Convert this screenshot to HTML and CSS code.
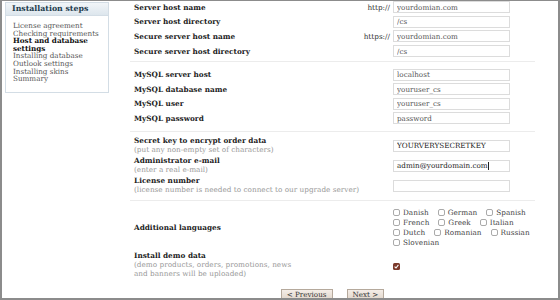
FILE: index.html
```html
<!DOCTYPE html>
<html lang="en">
<head>
    <meta charset="UTF-8">
    <title>Installation - Host and database settings</title>
    <link rel="stylesheet" href="styles.css">
</head>
<body>
    <div class="page">
        <div class="sidebar">
            <div class="sidebar-title">Installation steps</div>
            <ul class="steps">
                <li>License agreement</li>
                <li>Checking requirements</li>
                <li class="current">Host and database settings</li>
                <li>Installing database</li>
                <li>Outlook settings</li>
                <li>Installing skins</li>
                <li>Summary</li>
            </ul>
        </div>

        <div class="main">
            <div class="section host">
                <div class="row">
                    <div class="label">Server host name</div>
                    <div class="prefix">http://</div>
                    <input class="field" type="text" value="yourdomian.com">
                </div>
                <div class="row">
                    <div class="label">Server host directory</div>
                    <input class="field" type="text" value="/cs">
                </div>
                <div class="row">
                    <div class="label">Secure server host name</div>
                    <div class="prefix">https://</div>
                    <input class="field" type="text" value="yourdomian.com">
                </div>
                <div class="row">
                    <div class="label">Secure server host directory</div>
                    <input class="field" type="text" value="/cs">
                </div>
            </div>

            <div class="section db">
                <div class="row">
                    <div class="label">MySQL server host</div>
                    <input class="field" type="text" value="localhost">
                </div>
                <div class="row">
                    <div class="label">MySQL database name</div>
                    <input class="field" type="text" value="youruser_cs">
                </div>
                <div class="row">
                    <div class="label">MySQL user</div>
                    <input class="field" type="text" value="youruser_cs">
                </div>
                <div class="row">
                    <div class="label">MySQL password</div>
                    <input class="field" type="text" value="password">
                </div>
            </div>

            <div class="section keys">
                <div class="row tall">
                    <div class="label">Secret key to encrypt order data<span class="hint">(put any non-empty set of characters)</span></div>
                    <input class="field dark" type="text" value="YOURVERYSECRETKEY">
                </div>
                <div class="row tall">
                    <div class="label">Administrator e-mail<span class="hint">(enter a real e-mail)</span></div>
                    <div class="field dark focused">admin@yourdomain.com<span class="caret"></span></div>
                </div>
                <div class="row tall">
                    <div class="label">License number<span class="hint">(license number is needed to connect to our upgrade server)</span></div>
                    <input class="field" type="text" value="">
                </div>
            </div>

            <div class="section last">
                <div class="row langs-row">
                    <div class="label">Additional languages</div>
                    <div class="langs">
                        <label><span class="box"></span>Danish</label>
                        <label><span class="box"></span>German</label>
                        <label><span class="box"></span>Spanish</label>
                        <label><span class="box"></span>French</label>
                        <label><span class="box"></span>Greek</label>
                        <label><span class="box"></span>Italian</label>
                        <label><span class="box"></span>Dutch</label>
                        <label><span class="box"></span>Romanian</label>
                        <label><span class="box"></span>Russian</label>
                        <label><span class="box"></span>Slovenian</label>
                    </div>
                </div>
                <div class="row demo-row">
                    <div class="label">Install demo data<span class="hint">(demo products, orders, promotions, news<br>and banners will be uploaded)</span></div>
                    <div class="demo-check">
                        <svg class="checked" width="7" height="7" viewBox="0 0 7 7">
                            <rect x="0" y="0" width="7" height="7" rx="1.5" fill="#7b3a2b"/>
                            <path d="M1.6 3.6 L3 5 L5.4 1.9" fill="none" stroke="#fff" stroke-width="1.1"/>
                        </svg>
                    </div>
                </div>
            </div>

            <div class="buttons">
                <button class="btn">&lt; Previous</button>
                <button class="btn">Next &gt;</button>
            </div>
        </div>
    </div>
</body>
</html>
```

FILE: styles.css
```css
body {
    margin: 0;
    font-family: "DejaVu Serif", serif;
    font-size: 7.3px;
    background-color: #fff;
    color: #222;
}

.page {
    display: flex;
    align-items: flex-start;
    width: 560px;
    height: 300px;
    box-sizing: border-box;
    border: 2px solid #8c8c8c;
    border-top-width: 1px;
    overflow: hidden;
}

/* left column with the steps */
.sidebar {
    width: 102px;
    margin: 1px 0 0 3px;
    border: 1px solid #d3dde5;
    padding-bottom: 9px;
}

.sidebar-title {
    height: 12px;
    line-height: 12px;
    padding: 0 6px;
    background: linear-gradient(#f1f5f8, #dde6ed);
    border-bottom: 1px solid #d3dde5;
    color: #1d3b4c;
    font-weight: bold;
    font-size: 7.8px;
}

.steps {
    list-style: none;
    margin: 6px 0 0;
    padding: 0 7px;
    font-size: 7.2px;
    line-height: 7.6px;
    color: #555;
}

.steps .current {
    font-weight: bold;
    color: #111;
}

/* form */
.main {
    width: 405px;
    margin-left: 21px;
}

.section {
    border-bottom: 1px solid #ececec;
    padding: 0 25px 3px 4px;
    margin-bottom: 5px;
}

.section.host {
    margin-top: -1px;
}

.section.db {
    padding-bottom: 5px;
    margin-bottom: 4px;
}

.section.keys {
    padding-bottom: 4px;
    margin-bottom: 7px;
}

.section.last {
    border-bottom: none;
    margin-bottom: 0;
}

.row {
    display: flex;
    align-items: center;
    height: 14.6px;
}

.label {
    flex: 1;
    font-weight: bold;
    color: #222;
}

.prefix {
    margin-right: 3px;
    color: #333;
}

.field {
    width: 117px;
    height: 12px;
    line-height: 10px;
    box-sizing: border-box;
    margin: 0;
    padding: 0 3px;
    border: 1px solid #dcdcdc;
    font-family: "DejaVu Serif", serif;
    font-size: 7.2px;
    color: #555;
    background: #fff;
}

.field.dark {
    color: #222;
}

.caret {
    display: inline-block;
    width: 1px;
    height: 8px;
    vertical-align: -2px;
    background: #222;
}

.row.tall {
    height: 20px;
    line-height: 8.6px;
}

.hint {
    display: block;
    font-weight: normal;
    color: #999;
}

.langs-row {
    height: 40px;
}

.langs {
    flex: none;
    display: flex;
    flex-wrap: wrap;
    column-gap: 9px;
    width: 156px;
    margin-right: -39px;
    line-height: 10px;
}

.langs label {
    display: flex;
    align-items: center;
    color: #444;
}

.box {
    display: inline-block;
    width: 7px;
    height: 7px;
    box-sizing: border-box;
    margin-right: 3px;
    border: 1px solid #aaa;
    border-radius: 2px;
    background: #fff;
}

.demo-row {
    height: 27px;
    margin-top: 4px;
    line-height: 8.8px;
}

.demo-check {
    width: 117px;
    padding-top: 2px;
}

.checked {
    display: block;
}

.buttons {
    display: flex;
    justify-content: center;
    gap: 14px;
    margin-top: 7px;
}

.btn {
    height: 12px;
    padding: 0 5px;
    line-height: 10px;
    font-family: "DejaVu Serif", serif;
    font-size: 7.2px;
    color: #333;
    background: linear-gradient(#f4ede7, #e0d5ca);
    border: 1px solid #b5a99c;
    border-radius: 0;
    cursor: pointer;
}
```
